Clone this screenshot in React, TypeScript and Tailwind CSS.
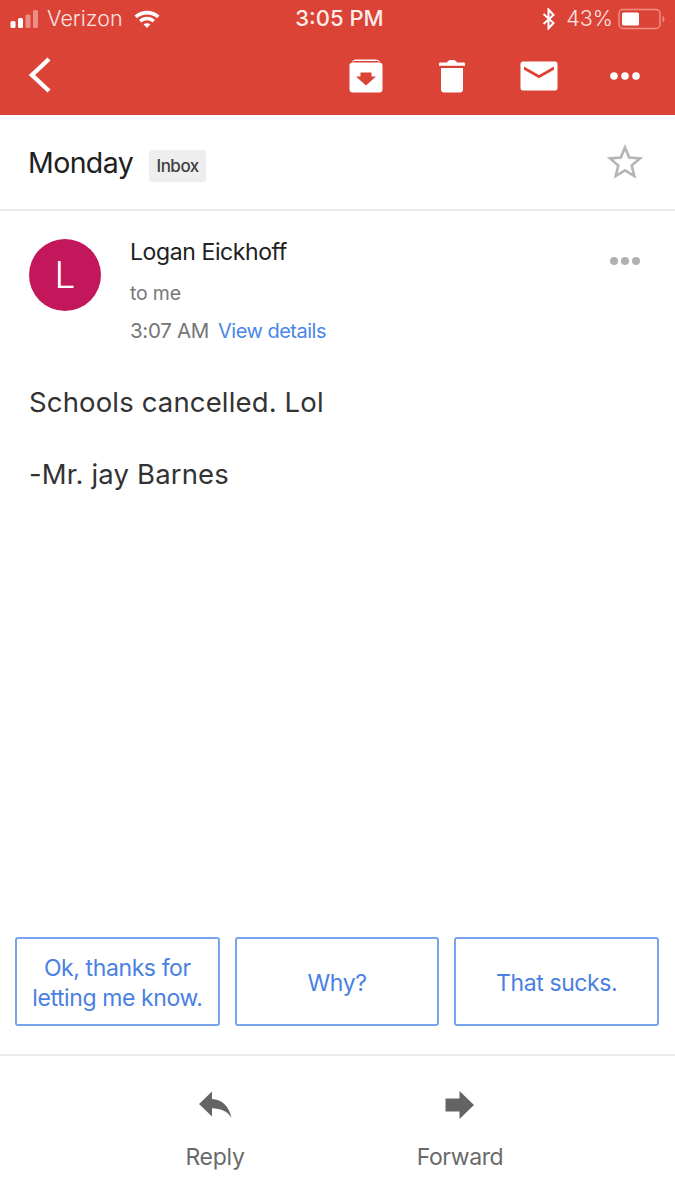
import React from "react";

const font = { fontFamily: '"Inter", "Liberation Sans", sans-serif' };

function SignalBars() {
  return (
    <svg width="32" height="20" viewBox="0 0 32 20" className="shrink-0">
      <rect x="0.5" y="12" width="5" height="7" rx="1.5" fill="#fff" />
      <rect x="8" y="9" width="5" height="10" rx="1.5" fill="#fff" />
      <rect x="15.5" y="5.5" width="5" height="13.5" rx="1.5" fill="#ee8f86" />
      <rect x="23" y="1" width="5" height="18" rx="1.5" fill="#ee8f86" />
    </svg>
  );
}

function Wifi() {
  return (
    <svg width="26" height="20" viewBox="0 0 26 20" className="shrink-0">
      <path d="M0.5 6.5C7.5 0 18.5 0 25.5 6.5L23 9.2C17.5 4.2 8.5 4.2 3 9.2Z" fill="#fff" />
      <path d="M5 11C10 6.8 16 6.8 21 11L18.6 13.6C15 10.6 11 10.6 7.4 13.6Z" fill="#fff" />
      <path d="M9.5 15.3C11.6 13.8 14.4 13.8 16.5 15.3L13 19Z" fill="#fff" />
    </svg>
  );
}

function Bluetooth() {
  return (
    <svg width="14" height="22" viewBox="0 0 14 22" className="shrink-0">
      <path d="M1.5 6L11.5 15L6.5 20.5V1.5L11.5 7L1.5 16" fill="none" stroke="#fff" strokeWidth="2" />
    </svg>
  );
}

function Battery() {
  return (
    <svg width="48" height="22" viewBox="0 0 48 22" className="shrink-0">
      <rect x="1" y="1.5" width="41" height="19" rx="4" fill="none" stroke="#f08d84" strokeWidth="1.5" />
      <rect x="4" y="4.5" width="17" height="13" rx="1.5" fill="#fff" />
      <path d="M44.5 8C46 8.5 46.5 9.5 46.5 11C46.5 12.5 46 13.5 44.5 14Z" fill="#f08d84" />
    </svg>
  );
}

function ArchiveIcon() {
  return (
    <svg width="34" height="34" viewBox="0 0 34 34">
      <path d="M3 3.2C3.8 1.4 5 0.5 7 0.5H27C29 0.5 30.2 1.4 31 3.2C30 2.4 28.5 2 27 2H7C5.5 2 4 2.4 3 3.2Z" fill="#fff" />
      <path d="M0.5 6.5C0.5 4.8 1.8 3.6 3.5 3.6H30.5C32.2 3.6 33.5 4.8 33.5 6.5V30.5C33.5 32.2 32.2 33.5 30.5 33.5H3.5C1.8 33.5 0.5 32.2 0.5 30.5Z" fill="#fff" />
      <path d="M11.5 13.5H22.5V17.5H27L17 26.5L7 17.5H11.5Z" fill="#dc4337" />
    </svg>
  );
}

function TrashIcon() {
  return (
    <svg width="28" height="34" viewBox="0 0 28 34">
      <path d="M1 5C1 4 1.5 3.6 2.5 3.6H9C10 1.5 11.5 1 14 1C16.5 1 18 1.5 19 3.6H25.5C26.5 3.6 27 4 27 5V6.8H1Z" fill="#fff" />
      <path d="M3 9H25V30.5C25 32.4 23.8 33.5 22 33.5H6C4.2 33.5 3 32.4 3 30.5Z" fill="#fff" />
    </svg>
  );
}

function MailIcon() {
  return (
    <svg width="38" height="30" viewBox="0 0 38 30">
      <rect x="0.5" y="0.5" width="37" height="29" rx="2.5" fill="#fff" />
      <path d="M4 5.5L19 14L34 5.5V8.7L19 17.2L4 8.7Z" fill="#dc4337" />
    </svg>
  );
}

function Dots({ color, r }: { color: string; r: number }) {
  return (
    <svg width="32" height="10" viewBox="0 0 32 10">
      <circle cx="5" cy="5" r={r} fill={color} />
      <circle cx="16" cy="5" r={r} fill={color} />
      <circle cx="27" cy="5" r={r} fill={color} />
    </svg>
  );
}

function ReplyIcon() {
  return (
    <svg width="34" height="28" viewBox="0 0 34 28">
      <path d="M1 13L14 0.5V8C24 8.5 31 15 33.5 27C29.5 20 23.5 17.5 14 17.2V25.5Z" fill="#646464" />
    </svg>
  );
}

function ForwardIcon() {
  return (
    <svg width="30" height="28" viewBox="0 0 30 28">
      <path d="M0.5 7.5H14.5V0L29 14L14.5 28V20.5H0.5Z" fill="#646464" />
    </svg>
  );
}

function Star() {
  return (
    <svg width="36" height="35" viewBox="0 0 36 35">
      <path
        d="M18 3.5L22.2 13.6L33 14.4L24.7 21.5L27.3 32L18 26.3L8.7 32L11.3 21.5L3 14.4L13.8 13.6Z"
        fill="none"
        stroke="#b5b5b5"
        strokeWidth="2.6"
      />
    </svg>
  );
}

function Suggestion({ children }: { children: React.ReactNode }) {
  return (
    <div className="flex h-[89px] flex-1 items-center justify-center rounded-[3px] border-2 border-[#79a3ea] px-1 pt-[3px] text-center text-[23px] leading-[30px] tracking-[-0.4px] text-[#4a80e2]">
      {children}
    </div>
  );
}

export default function App() {
  return (
    <div className="flex h-[1200px] w-[675px] flex-col overflow-hidden bg-white" style={font}>
      <header className="h-[115px] shrink-0 bg-[#dc4337] text-white">
        <div className="flex h-[37px] items-center justify-between pl-[10px] pr-[9px]">
          <div className="flex w-[240px] items-center">
            <SignalBars />
            <span className="ml-[5px] text-[21.5px] font-light text-[#fbe4e1]">Verizon</span>
            <span className="ml-[11px]"><Wifi /></span>
          </div>
          <span className="ml-[3px] text-[22px] font-medium text-[#fdeeec]">3:05 PM</span>
          <div className="flex w-[240px] items-center justify-end">
            <Bluetooth />
            <span className="ml-[10px] mr-[5px] text-[21.5px] font-light text-[#fbe4e1]">43%</span>
            <Battery />
          </div>
        </div>
        <div className="flex h-[78px] items-center pl-[28px] pb-[1px]">
          <svg width="24" height="36" viewBox="0 0 24 36" className="mb-[2px]">
            <path d="M21 2L4 18L21 34" fill="none" stroke="#fff" strokeWidth="4.4" />
          </svg>
          <div className="ml-[297px] flex items-center">
            <ArchiveIcon />
            <span className="ml-[55px] flex"><TrashIcon /></span>
            <span className="ml-[54px] flex"><MailIcon /></span>
            <span className="ml-[51px] flex"><Dots color="#fff" r={3.8} /></span>
          </div>
        </div>
      </header>

      <section className="flex h-[96px] shrink-0 items-center border-b-2 border-[#ebebeb] pl-[28px] pr-[32px]">
        <h1 className="mt-[2px] text-[28.5px] font-normal tracking-[-0.6px] text-[#202020]">Monday</h1>
        <span className="ml-[16px] mt-[8px] flex h-[32px] w-[57px] items-center justify-center rounded-[3px] bg-[#eeeeee] pt-[2px] text-[17px] font-medium tracking-[-0.5px] text-[#3f3f3f]">
          Inbox
        </span>
        <span className="ml-auto mb-[1px] flex"><Star /></span>
      </section>

      <section className="flex shrink-0 pl-[29px] pr-[34px] pt-[28px]">
        <div className="flex h-[72px] w-[72px] shrink-0 items-center justify-center rounded-full bg-[#c2185b] text-[37px] font-light text-[#fff]">
          L
        </div>
        <div className="-mt-[2px] ml-[29px]">
          <div className="h-[30px] text-[23px] leading-[30px] tracking-[-0.4px] text-[#212121]">Logan Eickhoff</div>
          <div className="mt-[14px] h-[24px] text-[19.5px] leading-[24px] tracking-[-0.2px] text-[#777777]">to me</div>
          <div className="mt-[13px] flex h-[26px] items-center text-[20.5px] tracking-[-0.3px]">
            <span className="text-[#757575]">3:07 AM</span>
            <span className="ml-[9px] text-[20px] tracking-[-0.5px] text-[#4a86e8]">View details</span>
          </div>
        </div>
        <span className="ml-auto mt-[17px] flex h-[10px]"><Dots color="#b0b0b0" r={4} /></span>
      </section>

      <section className="mt-[40px] shrink-0 pl-[29px] text-[27.5px] leading-[36px] tracking-[0.15px] text-[#333333]">
        <p>Schools cancelled. Lol</p>
        <p className="mt-[36px]">-Mr. jay Barnes</p>
      </section>

      <div className="flex-1" />

      <section className="flex shrink-0 gap-[15px] pb-[28px] pl-[15px] pr-[16px]">
        <Suggestion>
          <span>Ok, thanks for<br />letting me know.</span>
        </Suggestion>
        <Suggestion>Why?</Suggestion>
        <Suggestion>That sucks.</Suggestion>
      </section>

      <footer className="flex h-[146px] shrink-0 border-t-2 border-[#ebebeb] pl-[166px] pt-[35px]">
        <div className="flex w-[98px] flex-col items-center">
          <ReplyIcon />
          <span className="mt-[21px] text-[23px] tracking-[-0.3px] text-[#6a6a6a]">Reply</span>
        </div>
        <div className="ml-[147px] flex w-[98px] flex-col items-center">
          <ForwardIcon />
          <span className="mt-[21px] text-[23px] tracking-[-0.4px] text-[#6a6a6a]">Forward</span>
        </div>
      </footer>
    </div>
  );
}
